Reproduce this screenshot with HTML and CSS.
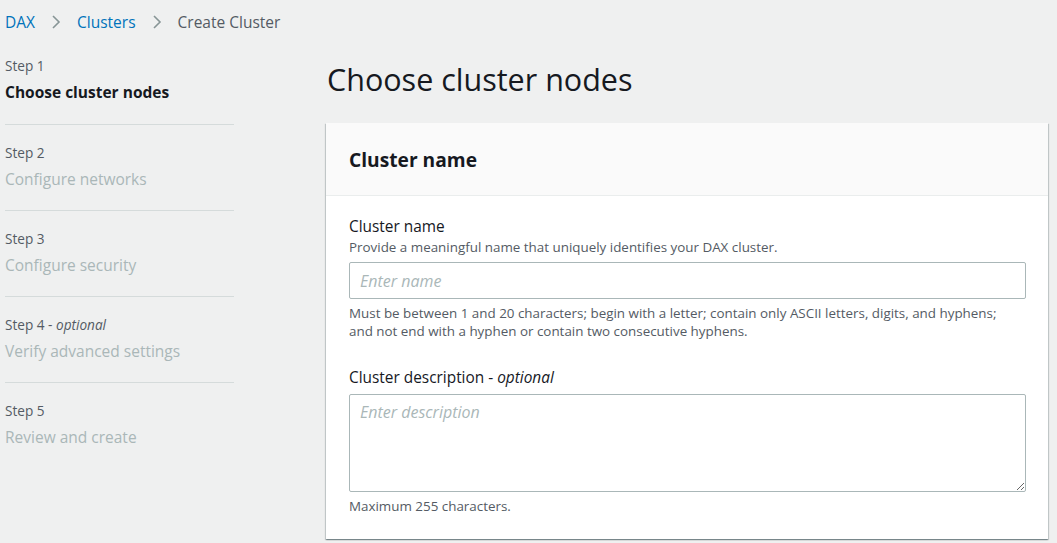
FILE: index.html
```html
<!DOCTYPE html>
<html lang="en">
<head>
<meta charset="utf-8">
<title>Create Cluster</title>
<link rel="stylesheet" href="styles.css">
</head>
<body>
<nav class="breadcrumbs">
  <a class="crumb link" href="#">DAX</a>
  <svg class="chev" viewBox="0 0 10 16" width="10" height="16"><path d="M2 2l6 6-6 6" fill="none" stroke="#879596" stroke-width="1.6"/></svg>
  <a class="crumb link" href="#">Clusters</a>
  <svg class="chev" viewBox="0 0 10 16" width="10" height="16"><path d="M2 2l6 6-6 6" fill="none" stroke="#879596" stroke-width="1.6"/></svg>
  <span class="crumb current">Create Cluster</span>
</nav>
<div class="layout">
  <aside class="steps">
    <div class="step">
      <div class="step-num">Step 1</div>
      <div class="step-title active">Choose cluster nodes</div>
    </div>
    <div class="step">
      <div class="step-num">Step 2</div>
      <div class="step-title">Configure networks</div>
    </div>
    <div class="step">
      <div class="step-num">Step 3</div>
      <div class="step-title">Configure security</div>
    </div>
    <div class="step">
      <div class="step-num">Step 4 - <i>optional</i></div>
      <div class="step-title">Verify advanced settings</div>
    </div>
    <div class="step">
      <div class="step-num">Step 5</div>
      <div class="step-title">Review and create</div>
    </div>
  </aside>
  <main class="main">
    <h1 class="page-title">Choose cluster nodes</h1>
    <section class="card">
      <header class="card-header">
        <h2>Cluster name</h2>
      </header>
      <div class="card-body">
        <div class="field">
          <label class="label">Cluster name</label>
          <div class="desc">Provide a meaningful name that uniquely identifies your DAX cluster.</div>
          <input class="input" type="text" placeholder="Enter name">
          <div class="hint">Must be between 1 and 20 characters; begin with a letter; contain only ASCII letters, digits, and hyphens;<br>and not end with a hyphen or contain two consecutive hyphens.</div>
        </div>
        <div class="field second">
          <label class="label">Cluster description - <i>optional</i></label>
          <textarea class="textarea" placeholder="Enter description"></textarea>
          <div class="hint">Maximum 255 characters.</div>
        </div>
      </div>
    </section>
  </main>
</div>
</body>
</html>
```
FILE: styles.css
```css
* { box-sizing: border-box; }
html, body { margin: 0; padding: 0; }
body {
  background: #eff0f0;
  font-family: "Open Sans", "Noto Sans", sans-serif;
  color: #16191f;
  width: 1057px;
  height: 543px;
  overflow: hidden;
}
.breadcrumbs {
  display: flex;
  align-items: center;
  gap: 16px;
  padding: 10px 0 0 5px;
  height: 34px;
  font-size: 15.5px;
}
.crumb { text-decoration: none; }
.link { color: #0073bb; }
.current { color: #545b64; }
.chev { display: block; }
.layout {
  display: flex;
  padding: 17px 0 0 5px;
}
.steps {
  width: 229px;
  flex: none;
}
.step {
  height: 86px;
  border-bottom: 1px solid #d5dbdb;
  padding-top: 19px;
}
.step:first-child { padding-top: 6px; height: 74px; }
.step:last-child { border-bottom: none; }
.step-num {
  font-size: 13.6px;
  color: #545b64;
  line-height: 18px;
}
.step-title {
  font-size: 15.5px;
  line-height: 20px;
  margin-top: 7px;
  color: #aab7b8;
}
.step-title.active { color: #16191f; font-weight: 700; }
.main {
  margin-left: 92px;
  width: 722px;
}
.page-title {
  font-size: 30.5px;
  font-weight: 400;
  margin: 10px 0 0;
  line-height: 36px;
  padding-left: 1px;
}
.card {
  margin-top: 26px;
  background: #fff;
  box-shadow: 0 1px 1px 0 rgba(0,28,36,.3), 1px 1px 1px 0 rgba(0,28,36,.15), -1px 1px 1px 0 rgba(0,28,36,.15);
}
.card-header {
  background: #fafafa;
  border-bottom: 1px solid #eaeded;
  height: 73px;
  display: flex;
  align-items: center;
  padding: 0 23px;
}
.card-header h2 {
  font-size: 19.2px;
  font-weight: 700;
  margin: 0;
}
.card-body {
  padding: 20px 22px 24px 23px;
}
.label {
  display: block;
  font-size: 15.4px;
  line-height: 22px;
}
.desc, .hint {
  font-size: 13.4px;
  line-height: 18px;
  color: #545b64;
}
.input {
  display: block;
  width: 100%;
  height: 37px;
  margin-top: 6px;
  border: 1px solid #aab7b8;
  border-radius: 2px;
  padding: 0 10px;
  font-family: inherit;
  font-size: 16px;
}
.input::placeholder, .textarea::placeholder {
  color: #aab7b8;
  font-style: italic;
}
.hint { margin-top: 5px; }
.second { margin-top: 27px; }
.textarea {
  display: block;
  width: 100%;
  height: 98px;
  margin-top: 5px;
  border: 1px solid #aab7b8;
  border-radius: 2px;
  padding: 6px 10px;
  font-family: inherit;
  font-size: 16px;
  line-height: 22px;
  resize: vertical;
}
```
